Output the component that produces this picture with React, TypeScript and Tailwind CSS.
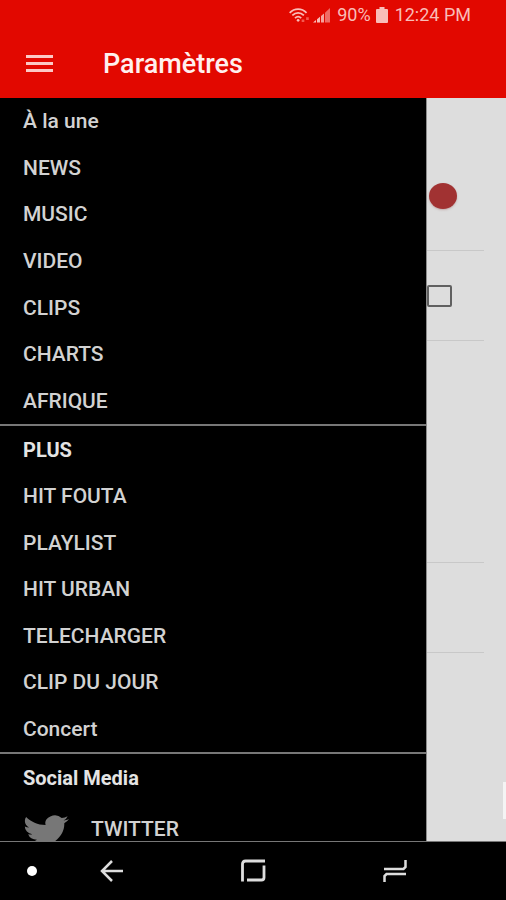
import React from "react";

const mainLinks = ["À la une", "NEWS", "MUSIC", "VIDEO", "CLIPS", "CHARTS", "AFRIQUE"];
const moreLinks = ["HIT FOUTA", "PLAYLIST", "HIT URBAN", "TELECHARGER", "CLIP DU JOUR", "Concert"];

function DrawerLink({ label }: { label: string }) {
  return (
    <li className="flex flex-1 items-center">
      <a href="#" className="w-full px-[23px] text-[21px] leading-5 font-medium text-[#d2d2d2]">
        {label}
      </a>
    </li>
  );
}

function StatusBar() {
  return (
    <div className="flex h-[30px] items-center justify-end pr-[35px] text-lg leading-6 text-[#f9bdb8]">
      <svg viewBox="0 0 24 18" className="h-[16px] w-[24px]" fill="none" stroke="currentColor" strokeWidth="2">
        <path d="M1.500 6.500C7 1 15 1 20.500 6.500" />
        <path d="M4.500 9.500C8.500 5.500 13.500 5.500 17.500 9.500" />
        <path d="M7.500 12.500C9.800 10.300 12.200 10.300 14.500 12.500" />
        <circle cx="11" cy="15" r="1.500" fill="currentColor" stroke="none" />
        <path d="M15 15.500h3M20 13h3" stroke="#f4584f" strokeWidth="3" />
      </svg>
      <svg viewBox="0 0 18 16" className="ml-0.5 h-[16px] w-[18px]" fill="currentColor">
        <path d="M0 15.500L3 13v2.500zM4 12.300l3-2.500v5.700H4z" />
        <path d="M8 9l3-2.500v9H8z" opacity=".85" />
        <path d="M12 5.700L17 1v14.500h-5z" opacity=".55" />
      </svg>
      <span className="ml-1.5">90%</span>
      <svg viewBox="0 0 12 16" className="ml-[5px] h-[16px] w-[12px]" fill="currentColor">
        <path d="M3.500 0h5v2H11a1 1 0 0 1 1 1v12a1 1 0 0 1-1 1H1a1 1 0 0 1-1-1V3a1 1 0 0 1 1-1h2.500z" />
      </svg>
      <span className="ml-[7px]">12:24 PM</span>
    </div>
  );
}

function Drawer() {
  return (
    <nav className="min-w-0 flex-1 overflow-hidden bg-black">
      <ul className="flex h-[326px] flex-col">
        {mainLinks.map((label) => (
          <DrawerLink key={label} label={label} />
        ))}
      </ul>

      {/* More */}
      <div className="flex h-[328px] flex-col border-t-2 border-[#777777]">
        <h2 className="px-[23px] pt-3 pb-[11px] text-xl leading-6 font-bold text-[#e4e4e4]">PLUS</h2>
        <ul className="flex flex-1 flex-col">
          {moreLinks.map((label) => (
            <DrawerLink key={label} label={label} />
          ))}
        </ul>
      </div>

      {/* Social */}
      <div className="border-t-2 border-[#777777]">
        <h2 className="px-[23px] pt-3 pb-[11px] text-xl leading-6 font-bold text-[#e4e4e4]">Social Media</h2>
        <a
          href="#"
          className="flex h-14 items-center gap-[22px] px-[23px] text-[21px] leading-5 font-medium text-[#d2d2d2]"
        >
          <svg viewBox="0 0 24 24" preserveAspectRatio="none" className="mt-1 h-[38px] w-[46px]" fill="#777777">
            <path d="M23.950 4.570a10 10 0 0 1-2.820.770 4.960 4.960 0 0 0 2.160-2.720c-.950.550-2 .950-3.120 1.180a4.920 4.920 0 0 0-8.380 4.480C7.690 8.090 4.070 6.130 1.640 3.160a4.820 4.820 0 0 0-.670 2.480c0 1.710.870 3.210 2.190 4.100a4.900 4.900 0 0 1-2.230-.620v.060a4.920 4.920 0 0 0 3.950 4.830 5 5 0 0 1-2.210.080 4.940 4.940 0 0 0 4.600 3.420A9.870 9.870 0 0 1 0 19.540a13.940 13.940 0 0 0 7.550 2.210c9.050 0 14-7.500 14-13.980 0-.210 0-.420-.020-.630a9.940 9.940 0 0 0 2.460-2.550z" />
          </svg>
          TWITTER
        </a>
      </div>
    </nav>
  );
}

function SettingsPanel() {
  return (
    <section className="relative w-20 border-l border-[#8c8c8c] bg-[#dddddd] pr-[22px]">
      <div className="flex h-[153px] items-center border-b border-[#c8c8c8] pt-[43px]">
        <input
          type="checkbox"
          role="switch"
          defaultChecked
          aria-label="Notifications"
          className="ml-0.5 h-[26px] w-7 shrink-0 appearance-none rounded-[50%] bg-[#a13232] shadow-[0_1px_2px_#a8787880]"
        />
      </div>
      <div className="flex h-[90px] items-center border-b border-[#c8c8c8]">
        <input
          type="checkbox"
          aria-label="Option"
          className="h-[22px] w-[25px] shrink-0 appearance-none rounded-[2px] border-2 border-[#606060]"
        />
      </div>
      <div className="h-[222px] border-b border-[#c8c8c8]" />
      <div className="h-[90px] border-b border-[#c8c8c8]" />
      {/* Scroll handle */}
      <div className="absolute right-0 bottom-[22px] h-[37px] w-[3px] bg-[#f4f4f4]" />
    </section>
  );
}

export default function App() {
  return (
    <div className="flex h-screen flex-col overflow-hidden bg-black font-['Roboto',sans-serif]">
      <header className="bg-[#e20800] pb-px">
        <StatusBar />
        <div className="flex h-[67px] items-center pl-[26px]">
          <button type="button" aria-label="Menu" className="flex w-[27px] flex-col gap-1">
            <span className="h-[3px] w-full bg-[#fcc9c5]" />
            <span className="h-[3px] w-full bg-[#fcc9c5]" />
            <span className="h-[3px] w-full bg-[#fcc9c5]" />
          </button>
          <h1 className="ml-[50px] text-[27px] leading-8 font-medium text-[#fff0ee]">Paramètres</h1>
        </div>
      </header>

      <main className="flex min-h-0 flex-1">
        <Drawer />
        <SettingsPanel />
      </main>

      {/* System navigation */}
      <footer className="flex h-[59px] items-center border-t border-[#777777] pl-[27px] text-[#dddddd]">
        <span className="h-[10px] w-[10px] rounded-full bg-white" />
        <div className="flex flex-1 items-center justify-between pr-[98px] pl-[62px]">
          <button type="button" aria-label="Back">
            <svg viewBox="0 0 26 24" className="h-6 w-[26px]" fill="none" stroke="currentColor" strokeWidth="2.500">
              <path d="M13 2L3 12l10 10M3 12h21" />
            </svg>
          </button>
          <button type="button" aria-label="Home">
            <svg viewBox="0 0 26 24" className="h-6 w-[26px]" fill="none" stroke="currentColor" strokeWidth="2.800">
              <path d="M1.500 22.500V5q0-3 3-3H24M23 6.500v12q0 2.500-2.500 2.500H6" />
            </svg>
          </button>
          <button type="button" aria-label="Recent apps">
            <svg viewBox="0 0 26 24" className="h-6 w-[26px]" fill="none" stroke="currentColor" strokeWidth="2.500">
              <path d="M2 10h19.500l2-2V1M24 15H4.500l-2 2v6" />
            </svg>
          </button>
        </div>
      </footer>
    </div>
  );
}
